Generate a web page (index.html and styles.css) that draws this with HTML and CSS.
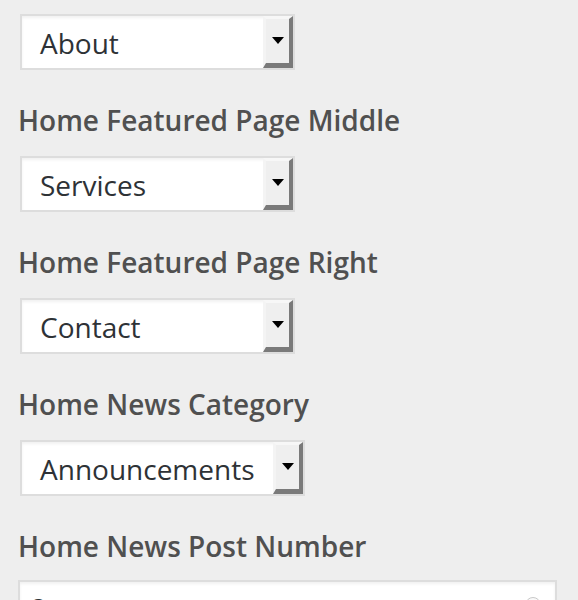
FILE: index.html
```html
<!DOCTYPE html>
<html lang="en">
<head>
    <meta charset="UTF-8">
    <meta name="viewport" content="width=device-width, initial-scale=1.0">
    <title>Theme Options</title>
    <link rel="stylesheet" href="styles.css">
</head>
<body>
    <div class="controls">
        <div class="control first">
            <div class="select">
                <span class="select-value">About</span>
                <span class="select-button"><span class="arrow"></span></span>
            </div>
        </div>

        <div class="control">
            <label class="control-title">Home Featured Page Middle</label>
            <div class="select">
                <span class="select-value">Services</span>
                <span class="select-button"><span class="arrow"></span></span>
            </div>
        </div>

        <div class="control">
            <label class="control-title">Home Featured Page Right</label>
            <div class="select">
                <span class="select-value">Contact</span>
                <span class="select-button"><span class="arrow"></span></span>
            </div>
        </div>

        <div class="control">
            <label class="control-title">Home News Category</label>
            <div class="select select-wide">
                <span class="select-value">Announcements</span>
                <span class="select-button"><span class="arrow"></span></span>
            </div>
        </div>

        <div class="control">
            <label class="control-title">Home News Post Number</label>
            <div class="number-input">
                <span class="number-value">2</span>
                <span class="spinner">
                    <svg width="16" height="22" viewBox="0 0 16 22">
                        <rect x="0.5" y="0.5" width="15" height="21" rx="7.5" fill="#fafafa" stroke="#c8c8c8"/>
                        <path d="M5 9 L8 5 L11 9 Z" fill="#333"/>
                        <path d="M5 13 L8 17 L11 13 Z" fill="#333"/>
                    </svg>
                </span>
            </div>
        </div>
    </div>
</body>
</html>
```

FILE: styles.css
```css
body {
    font-family: "Open Sans", "Liberation Sans", sans-serif;
    background-color: #eeeeee;
    margin: 0;
    padding: 0;
}

.controls {
    padding: 14px 0 0 18px;
}

.control {
    margin-top: 26px;
}

.control.first {
    margin-top: 0;
}

.control-title {
    display: block;
    font-size: 28px;
    font-weight: 600;
    line-height: 48px;
    color: #505050;
    margin-bottom: 12px;
}

.select {
    display: flex;
    box-sizing: border-box;
    width: 275px;
    height: 56px;
    margin-left: 2px;
    background-color: white;
    border: 2px solid #dddddd;
    box-shadow: inset 0 2px 3px rgba(0, 0, 0, 0.06);
}

.select-wide {
    width: 285px;
}

.select-value {
    flex: 1;
    padding-left: 18px;
    font-size: 28px;
    line-height: 54px;
    color: #2e3236;
}

.select-button {
    display: flex;
    justify-content: center;
    align-items: center;
    box-sizing: border-box;
    width: 30px;
    height: 100%;
    background-color: #efefef;
    border-style: solid;
    border-width: 3px 4px 5px 3px;
    border-color: #f7f7f7 #7a7a7a #7a7a7a #f4f4f4;
}

.arrow {
    width: 0;
    height: 0;
    margin-top: -2px;
    border-left: 6px solid transparent;
    border-right: 6px solid transparent;
    border-top: 7px solid #000000;
}

.number-input {
    display: flex;
    align-items: center;
    box-sizing: border-box;
    width: 539px;
    height: 56px;
    margin-top: -2px;
    background-color: white;
    border: 2px solid #dddddd;
    box-shadow: inset 0 2px 3px rgba(0, 0, 0, 0.06);
}

.number-value {
    flex: 1;
    padding-left: 11px;
    font-size: 28px;
    color: #2e3236;
}

.spinner {
    display: flex;
    margin-right: 14px;
}
```
